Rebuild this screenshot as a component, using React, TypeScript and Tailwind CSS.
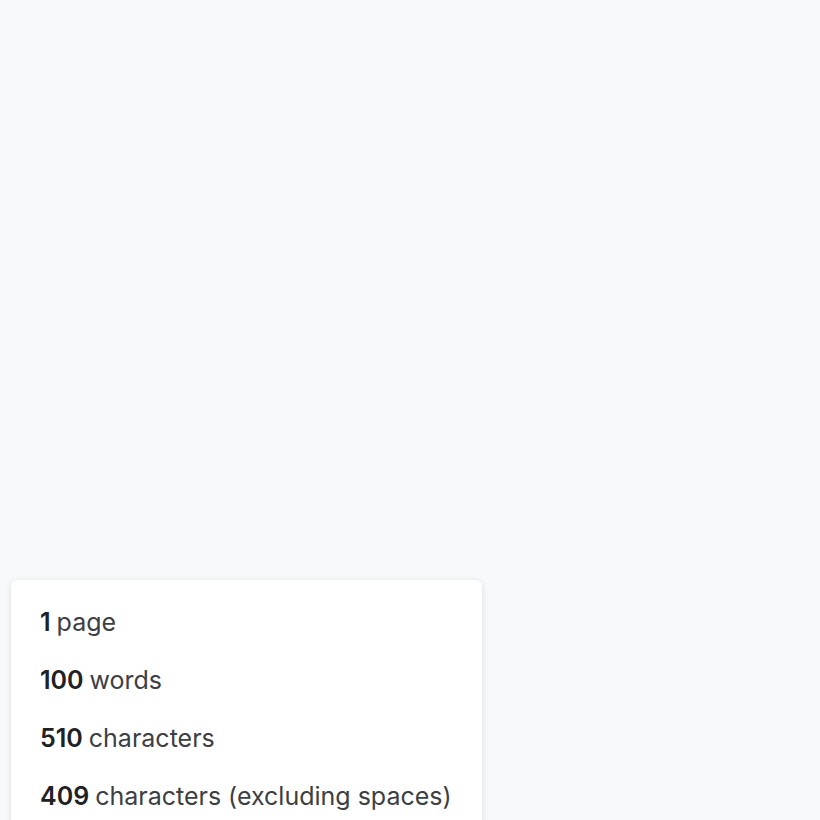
import React from 'react';

const stats = [
  { value: '1', label: 'page' },
  { value: '100', label: 'words' },
  { value: '510', label: 'characters' },
  { value: '409', label: 'characters (excluding spaces)' },
];

const App = () => {
  return (
    <div className="h-[820px] overflow-hidden bg-[#f8f9fb] pt-[580px] pl-[11px] font-['Inter',sans-serif]">
      <div className="w-[471px] h-[300px] rounded-md bg-white shadow-[0_1px_6px_rgba(60,64,67,0.15)] pt-[14px] pl-[29px]">
        {stats.map((s) => (
          <div key={s.label} className="h-[58px] flex items-center text-[25px] text-[#3c4043]">
            <span className="font-semibold text-[#202124]">{s.value}</span>
            <span className="ml-[6px]">{s.label}</span>
          </div>
        ))}
      </div>
    </div>
  );
};

export default App;
